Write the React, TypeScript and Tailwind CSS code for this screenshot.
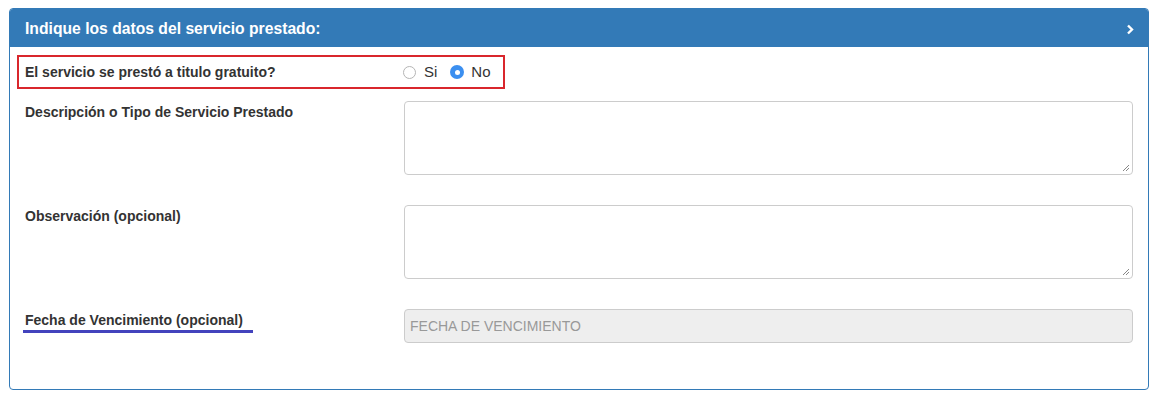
import React from "react";

export default function App() {
  return (
    <div className="w-[1157px] h-[397px] bg-white pt-[8px] pl-[9px]" style={{ fontFamily: '"Liberation Sans", Arial, sans-serif' }}>
      <div className="w-[1140px] h-[382px] border border-[#337ab7] rounded-[4px] flex flex-col overflow-hidden">
        <div className="h-[38px] bg-[#337ab7] flex items-center justify-between pl-[15px] pr-[13px] shrink-0">
          <span className="text-white font-bold text-[15.7px] mt-[1px]">Indique los datos del servicio prestado:</span>
          <svg width="9" height="11" viewBox="0 0 9 11" className="mt-[3px]">
            <path d="M2 1.5 L6 5.5 L2 9.5" fill="none" stroke="white" strokeWidth="2.4" />
          </svg>
        </div>
        <div className="flex flex-col pl-[7px] pt-[8px] text-[14px] leading-[18px] text-[#333]">
          <div className="w-[488px] h-[34px] border-2 border-[#d9262c] flex items-center pl-[6px]">
            <span className="font-bold w-[378px]">El servicio se prestó a titulo gratuito?</span>
            <label className="flex items-center">
              <span className="w-[13px] h-[13px] rounded-full border border-[#b5b5b5] bg-white"></span>
              <span className="ml-[8px] text-[15px]">Si</span>
            </label>
            <label className="flex items-center ml-[13px]">
              <span className="w-[14px] h-[14px] rounded-full bg-[#3b8ff0] flex items-center justify-center">
                <span className="w-[5px] h-[5px] rounded-full bg-white"></span>
              </span>
              <span className="ml-[7px] text-[15px]">No</span>
            </label>
          </div>

          <div className="flex mt-[12px]">
            <span className="font-bold w-[387px] pl-[8px] pt-[2px]">Descripción o Tipo de Servicio Prestado</span>
            <div className="relative w-[729px] h-[74px] border border-[#ccc] rounded-[4px] bg-white">
              <svg width="8" height="8" viewBox="0 0 8 8" className="absolute right-[2px] bottom-[2px]">
                <path d="M7 1 L1 7 M7 4 L4 7" stroke="#888" strokeWidth="1" />
              </svg>
            </div>
          </div>

          <div className="flex mt-[30px]">
            <span className="font-bold w-[387px] pl-[8px] pt-[2px]">Observación (opcional)</span>
            <div className="relative w-[729px] h-[74px] border border-[#ccc] rounded-[4px] bg-white">
              <svg width="8" height="8" viewBox="0 0 8 8" className="absolute right-[2px] bottom-[2px]">
                <path d="M7 1 L1 7 M7 4 L4 7" stroke="#888" strokeWidth="1" />
              </svg>
            </div>
          </div>

          <div className="flex mt-[30px]">
            <div className="w-[387px] pl-[6px] pt-[2px]">
              <div className="inline-flex flex-col">
                <span className="font-bold pl-[2px]">Fecha de Vencimiento (opcional)</span>
                <span className="h-[3px] w-[230px] bg-[#4343bd] mt-[1px]"></span>
              </div>
            </div>
            <div className="w-[729px] h-[34px] border border-[#ccc] rounded-[4px] bg-[#eee] flex items-center pl-[5px] text-[14px] text-[#999]">
              FECHA DE VENCIMIENTO
            </div>
          </div>
        </div>
      </div>
    </div>
  );
}
